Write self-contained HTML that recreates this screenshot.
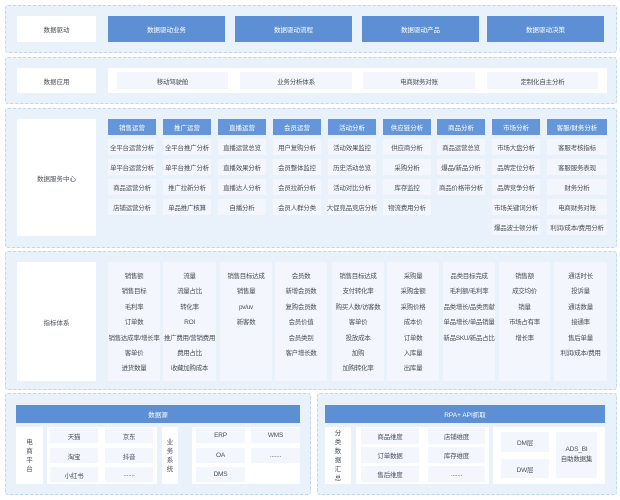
<!DOCTYPE html>
<html><head><meta charset="utf-8"><style>
*{margin:0;padding:0;box-sizing:border-box}
body{width:620px;height:500px;background:#fff;position:relative;overflow:hidden;font-family:"Liberation Sans","Noto Sans CJK SC",sans-serif;font-size:6.5px;color:#4a4f58}
div{position:absolute}
.sec{background:#e9f1fb;border:1px dashed #c3d5ee;border-radius:3px}
.w{background:#fff;display:flex;align-items:center;justify-content:center;text-align:center}
.b{background:#5d8fd4;color:#fff;display:flex;align-items:center;justify-content:center}
.h{background:#6496d9;color:#fff;display:flex;align-items:center;justify-content:center}
.c{background:#f3f7fd;display:flex;align-items:center;justify-content:center;white-space:nowrap;letter-spacing:-0.2px;text-align:center}
.col{background:#f3f7fd;text-align:center;line-height:15.4px;padding-top:7px;white-space:nowrap;letter-spacing:-0.3px}
.v{line-height:9px;flex-direction:column}
</style></head><body>
<div class="sec" style="left:5px;top:5px;width:612px;height:48px"></div>
<div class="w" style="left:17px;top:16px;width:79px;height:26px">数据驱动</div>
<div class="b" style="left:108px;top:16px;width:117px;height:26px">数据驱动业务</div>
<div class="b" style="left:235px;top:16px;width:117px;height:26px">数据驱动流程</div>
<div class="b" style="left:362px;top:16px;width:117px;height:26px">数据驱动产品</div>
<div class="b" style="left:487px;top:16px;width:117px;height:26px">数据驱动决策</div>

<div class="sec" style="left:5px;top:57px;width:612px;height:47px"></div>
<div class="w" style="left:17px;top:68px;width:79px;height:25px">数据应用</div>
<div class="w" style="left:108px;top:68px;width:499px;height:25px"></div>
<div class="c" style="left:117px;top:72px;width:111px;height:17px">移动驾驶舱</div>
<div class="c" style="left:240px;top:72px;width:112px;height:17px">业务分析体系</div>
<div class="c" style="left:363px;top:72px;width:112px;height:17px">电商财务对账</div>
<div class="c" style="left:487px;top:72px;width:111px;height:17px">定制化自主分析</div>

<div class="sec" style="left:5px;top:108px;width:612px;height:140px"></div>
<div class="w" style="left:17px;top:119px;width:79px;height:117px">数据服务中心</div>
<div class="h" style="left:108px;top:119px;width:48px;height:16px">销售运营</div>
<div class="h" style="left:163px;top:119px;width:48px;height:16px">推广运营</div>
<div class="h" style="left:218px;top:119px;width:48px;height:16px">直播运营</div>
<div class="h" style="left:273px;top:119px;width:48px;height:16px">会员运营</div>
<div class="h" style="left:328px;top:119px;width:48px;height:16px">活动分析</div>
<div class="h" style="left:383px;top:119px;width:48px;height:16px">供应链分析</div>
<div class="h" style="left:437px;top:119px;width:48px;height:16px">商品分析</div>
<div class="h" style="left:492px;top:119px;width:48px;height:16px">市场分析</div>
<div class="h" style="left:547px;top:119px;width:60px;height:16px">客服/财务分析</div>

<div class="c" style="left:108px;top:139px;width:48px;height:16px">全平台运营分析</div>
<div class="c" style="left:108px;top:159px;width:48px;height:16px">单平台运营分析</div>
<div class="c" style="left:108px;top:179px;width:48px;height:16px">商品运营分析</div>
<div class="c" style="left:108px;top:199px;width:48px;height:16px">店铺运营分析</div>
<div class="c" style="left:163px;top:139px;width:48px;height:16px">全平台推广分析</div>
<div class="c" style="left:163px;top:159px;width:48px;height:16px">单平台推广分析</div>
<div class="c" style="left:163px;top:179px;width:48px;height:16px">推广拉新分析</div>
<div class="c" style="left:163px;top:199px;width:48px;height:16px">单品推广核算</div>
<div class="c" style="left:218px;top:139px;width:48px;height:16px">直播运营总览</div>
<div class="c" style="left:218px;top:159px;width:48px;height:16px">直播效果分析</div>
<div class="c" style="left:218px;top:179px;width:48px;height:16px">直播达人分析</div>
<div class="c" style="left:218px;top:199px;width:48px;height:16px">自播分析</div>
<div class="c" style="left:273px;top:139px;width:48px;height:16px">用户复购分析</div>
<div class="c" style="left:273px;top:159px;width:48px;height:16px">会员整体监控</div>
<div class="c" style="left:273px;top:179px;width:48px;height:16px">会员拉新分析</div>
<div class="c" style="left:273px;top:199px;width:48px;height:16px">会员人群分类</div>
<div class="c" style="left:328px;top:139px;width:48px;height:16px">活动效果监控</div>
<div class="c" style="left:328px;top:159px;width:48px;height:16px">历史活动总览</div>
<div class="c" style="left:328px;top:179px;width:48px;height:16px">活动对比分析</div>
<div class="c" style="left:328px;top:199px;width:48px;height:16px">大促竞品竞店分析</div>
<div class="c" style="left:383px;top:139px;width:48px;height:16px">供应商分析</div>
<div class="c" style="left:383px;top:159px;width:48px;height:16px">采购分析</div>
<div class="c" style="left:383px;top:179px;width:48px;height:16px">库存监控</div>
<div class="c" style="left:383px;top:199px;width:48px;height:16px">物流费用分析</div>
<div class="c" style="left:437px;top:139px;width:48px;height:16px">商品运营总览</div>
<div class="c" style="left:437px;top:159px;width:48px;height:16px">爆品/新品分析</div>
<div class="c" style="left:437px;top:179px;width:48px;height:16px">商品价格带分析</div>
<div class="c" style="left:492px;top:139px;width:48px;height:16px">市场大盘分析</div>
<div class="c" style="left:492px;top:159px;width:48px;height:16px">品牌定位分析</div>
<div class="c" style="left:492px;top:179px;width:48px;height:16px">品牌竞争分析</div>
<div class="c" style="left:492px;top:199px;width:48px;height:16px">市场关键词分析</div>
<div class="c" style="left:492px;top:219px;width:48px;height:16px">爆品波士顿分析</div>
<div class="c" style="left:547px;top:139px;width:60px;height:16px">客服考核指标</div>
<div class="c" style="left:547px;top:159px;width:60px;height:16px">客服服务表现</div>
<div class="c" style="left:547px;top:179px;width:60px;height:16px">财务分析</div>
<div class="c" style="left:547px;top:199px;width:60px;height:16px">电商财务对账</div>
<div class="c" style="left:547px;top:219px;width:60px;height:16px">利润/成本/费用分析</div>

<div class="sec" style="left:5px;top:251px;width:612px;height:139px"></div>
<div class="w" style="left:17px;top:262px;width:79px;height:119px">指标体系</div>
<div class="col" style="left:108px;top:262px;width:52px;height:119px">销售额<br>销售目标<br>毛利率<br>订单数<br>销售达成率/增长率<br>客单价<br>进货数量</div>
<div class="col" style="left:163px;top:262px;width:53px;height:119px">流量<br>流量占比<br>转化率<br>ROI<br>推广费用/营销费用<br>费用占比<br>收藏加购成本</div>
<div class="col" style="left:220px;top:262px;width:52px;height:119px">销售目标达成<br>销售量<br>pv/uv<br>新客数</div>
<div class="col" style="left:275px;top:262px;width:52px;height:119px">会员数<br>新增会员数<br>复购会员数<br>会员价值<br>会员类别<br>客户增长数</div>
<div class="col" style="left:332px;top:262px;width:52px;height:119px">销售目标达成<br>支付转化率<br>购买人数/访客数<br>客单价<br>投放成本<br>加购<br>加购转化率</div>
<div class="col" style="left:387px;top:262px;width:52px;height:119px">采购量<br>采购金额<br>采购价格<br>成本价<br>订单数<br>入库量<br>出库量</div>
<div class="col" style="left:443px;top:262px;width:52px;height:119px">品类目标完成<br>毛利额/毛利率<br>品类增长/品类贡献<br>单品增长/单品销量<br>新品SKU/新品占比</div>
<div class="col" style="left:499px;top:262px;width:51px;height:119px">销售额<br>成交均价<br>销量<br>市场占有率<br>增长率</div>
<div class="col" style="left:554px;top:262px;width:53px;height:119px">通话时长<br>投诉量<br>通话数量<br>接通率<br>售后单量<br>利润/成本/费用</div>

<div class="sec" style="left:5px;top:393px;width:306px;height:102px"></div>
<div class="b" style="left:16px;top:405px;width:284px;height:18px">数据源</div>
<div class="w v" style="left:16px;top:427px;width:27px;height:57px">电<br>商<br>平<br>台</div>
<div class="w" style="left:47px;top:427px;width:110px;height:57px"></div>
<div class="c" style="left:50px;top:428px;width:48px;height:15px">天猫</div>
<div class="c" style="left:50px;top:448px;width:48px;height:15px">淘宝</div>
<div class="c" style="left:50px;top:467px;width:48px;height:15px">小红书</div>
<div class="c" style="left:105px;top:428px;width:48px;height:15px">京东</div>
<div class="c" style="left:105px;top:448px;width:48px;height:15px">抖音</div>
<div class="c" style="left:105px;top:467px;width:48px;height:15px">.......</div>
<div class="w v" style="left:162px;top:427px;width:16px;height:57px">业<br>务<br>系<br>统</div>
<div class="w" style="left:192px;top:427px;width:108px;height:57px"></div>
<div class="c" style="left:196px;top:428px;width:49px;height:15px">ERP</div>
<div class="c" style="left:196px;top:448px;width:49px;height:15px">OA</div>
<div class="c" style="left:196px;top:467px;width:49px;height:15px">DMS</div>
<div class="c" style="left:251px;top:428px;width:49px;height:15px">WMS</div>
<div class="c" style="left:251px;top:448px;width:49px;height:15px">.......</div>

<div class="sec" style="left:317px;top:393px;width:300px;height:102px"></div>
<div class="b" style="left:325px;top:405px;width:280px;height:18px">RPA+ API抓取</div>
<div class="w v" style="left:325px;top:427px;width:26px;height:57px">分<br>类<br>数<br>据<br>汇<br>总</div>
<div class="w" style="left:356px;top:427px;width:133px;height:57px"></div>
<div class="c" style="left:361px;top:428px;width:58px;height:16px">商品维度</div>
<div class="c" style="left:361px;top:447px;width:58px;height:16px">订单数据</div>
<div class="c" style="left:361px;top:466px;width:58px;height:16px">售后维度</div>
<div class="c" style="left:428px;top:428px;width:57px;height:16px">店铺维度</div>
<div class="c" style="left:428px;top:447px;width:57px;height:16px">库存维度</div>
<div class="c" style="left:428px;top:466px;width:57px;height:16px">.......</div>
<div class="w" style="left:493px;top:427px;width:112px;height:57px"></div>
<div class="c" style="left:501px;top:432px;width:48px;height:20px">DM层</div>
<div class="c" style="left:501px;top:459px;width:48px;height:19px">DW层</div>
<div class="c v" style="left:556px;top:432px;width:41px;height:46px;line-height:10px">ADS_BI<br>自助数据集</div>
</body></html>
